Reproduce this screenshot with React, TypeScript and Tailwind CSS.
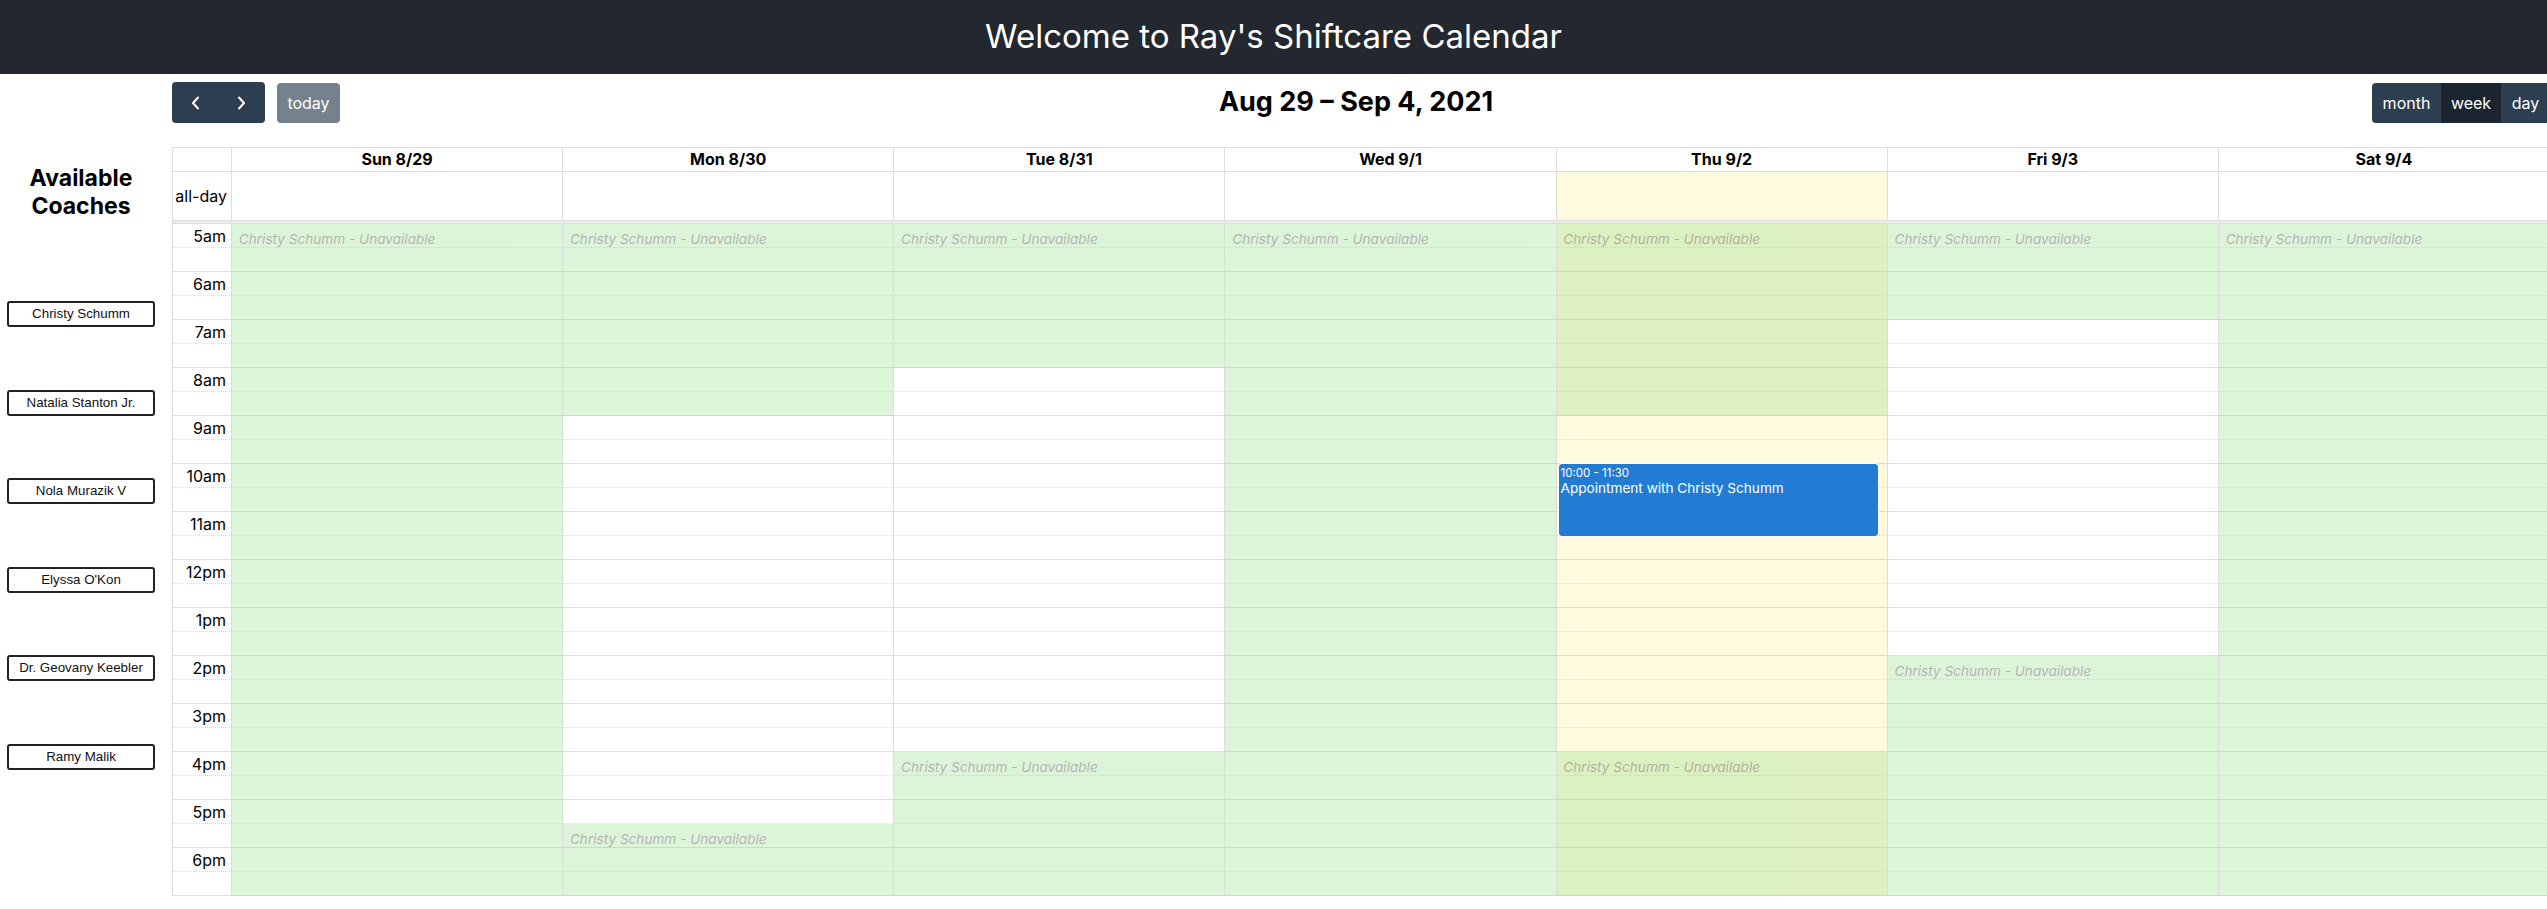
import React from "react";

type Segment = { start: number; end: number };
type Appt = { start: number; end: number; time: string; title: string };
type Day = { label: string; today?: boolean; unavailable: Segment[]; events?: Appt[] };

const COACHES = [
  "Christy Schumm",
  "Natalia Stanton Jr.",
  "Nola Murazik V",
  "Elyssa O'Kon",
  "Dr. Geovany Keebler",
  "Ramy Malik",
];

const DAYS: Day[] = [
  { label: "Sun 8/29", unavailable: [{ start: 5, end: 19 }] },
  { label: "Mon 8/30", unavailable: [{ start: 5, end: 9 }, { start: 17.5, end: 19 }] },
  { label: "Tue 8/31", unavailable: [{ start: 5, end: 8 }, { start: 16, end: 19 }] },
  { label: "Wed 9/1", unavailable: [{ start: 5, end: 19 }] },
  {
    label: "Thu 9/2",
    today: true,
    unavailable: [{ start: 5, end: 9 }, { start: 16, end: 19 }],
    events: [{ start: 10, end: 11.5, time: "10:00 - 11:30", title: "Appointment with Christy Schumm" }],
  },
  { label: "Fri 9/3", unavailable: [{ start: 5, end: 7 }, { start: 14, end: 19 }] },
  { label: "Sat 9/4", unavailable: [{ start: 5, end: 19 }] },
];

const FIRST_HOUR = 5;
const HOURS = 14;
const SLOT = 24; // half-hour slot height
const toY = (h: number) => (h - FIRST_HOUR) * SLOT * 2;

const hourLabel = (h: number) => {
  const suffix = h < 12 ? "am" : "pm";
  const n = h % 12 === 0 ? 12 : h % 12;
  return `${n}${suffix}`;
};

function Chevron({ dir }: { dir: "left" | "right" }) {
  return (
    <svg width="9" height="14" viewBox="0 0 9 14" fill="none">
      <polyline
        points={dir === "left" ? "7,1.5 2,7 7,12.5" : "2,1.5 7,7 2,12.5"}
        stroke="white"
        strokeWidth="2"
        strokeLinecap="round"
        strokeLinejoin="round"
      />
    </svg>
  );
}

function Toolbar() {
  return (
    <div className="flex items-center justify-between mb-[24px]">
      <div className="flex items-center gap-[12px]">
        <div className="flex">
          <button className="flex h-[41px] w-[46.5px] items-center justify-center rounded-l-[4px] bg-[#2c3e50]">
            <Chevron dir="left" />
          </button>
          <button className="flex h-[41px] w-[46.5px] items-center justify-center rounded-r-[4px] bg-[#2c3e50]">
            <Chevron dir="right" />
          </button>
        </div>
        <button className="h-[40px] w-[63px] rounded-[4px] bg-[#2c3e50] text-[16px] text-white opacity-65">
          today
        </button>
      </div>
      <h2 className="text-[27px] font-bold text-black">Aug 29 – Sep 4, 2021</h2>
      <div className="flex h-[40px] text-[16px] text-white">
        <button className="w-[69px] rounded-l-[4px] bg-[#2c3e50]">month</button>
        <button className="w-[60px] bg-[#1a252f]">week</button>
        <button className="w-[49px] rounded-r-[4px] bg-[#2c3e50]">day</button>
      </div>
    </div>
  );
}

function DayColumn({ day }: { day: Day }) {
  return (
    <div className={`relative border-r border-[#ddd] ${day.today ? "bg-[rgba(255,220,40,0.15)]" : ""}`}>
      {day.unavailable.map((s) => (
        <div
          key={s.start}
          className="absolute left-0 right-0 bg-[#8fdf82] opacity-30"
          style={{ top: toY(s.start), height: toY(s.end) - toY(s.start) }}
        >
          <div className="m-[6.8px] text-[13.6px] italic leading-[16px] text-black">Christy Schumm - Unavailable</div>
        </div>
      ))}
      {day.events?.map((e) => (
        <div
          key={e.title}
          className="absolute left-[2px] right-[2.5%] rounded-[3px] border border-[#237cd3] bg-[#237cd3] px-[1px] pt-[1px] text-white shadow-[0_0_0_1px_#fff]"
          style={{ top: toY(e.start), height: toY(e.end) - toY(e.start) }}
        >
          <div className="text-[11.5px] leading-[14px]">{e.time}</div>
          <div className="text-[13.6px] leading-[16px]">{e.title}</div>
        </div>
      ))}
    </div>
  );
}

function Calendar() {
  const slots = Array.from({ length: HOURS * 2 }, (_, i) => i);
  return (
    <div className="border-l border-t border-[#ddd] text-black">
      {/* day headers */}
      <div className="grid grid-cols-[59px_repeat(7,minmax(0,1fr))] border-b border-[#ddd]">
        <div className="h-[23px] border-r border-[#ddd]" />
        {DAYS.map((d) => (
          <div key={d.label} className="h-[23px] border-r border-[#ddd] text-center text-[16px] font-bold leading-[23px]">
            {d.label}
          </div>
        ))}
      </div>
      {/* all-day row */}
      <div className="grid grid-cols-[59px_repeat(7,minmax(0,1fr))] border-b border-[#ddd]">
        <div className="flex h-[48px] items-center justify-end border-r border-[#ddd] pr-[4px] text-[16px]">all-day</div>
        {DAYS.map((d) => (
          <div
            key={d.label}
            className={`h-[48px] border-r border-[#ddd] ${d.today ? "bg-[rgba(255,220,40,0.15)]" : ""}`}
          />
        ))}
      </div>
      <div className="h-[2px] border-b border-[#ddd] bg-[#ececec] box-content" />
      {/* time grid */}
      <div className="relative">
        {slots.map((i) => {
          const isHour = i % 2 === 0;
          return (
            <div
              key={i}
              className={`grid h-[24px] grid-cols-[59px_minmax(0,1fr)] border-b border-[#ddd] ${
                isHour ? "border-dotted" : "border-solid"
              }`}
            >
              <div className="border-r border-solid border-[#ddd] pr-[5px] text-right text-[16px] leading-[24px]">
                {isHour ? hourLabel(FIRST_HOUR + i / 2) : ""}
              </div>
              <div />
            </div>
          );
        })}
        <div className="absolute inset-0 grid grid-cols-[59px_repeat(7,minmax(0,1fr))]">
          <div />
          {DAYS.map((d) => (
            <DayColumn key={d.label} day={d} />
          ))}
        </div>
      </div>
    </div>
  );
}

export default function App() {
  return (
    <div className="min-h-screen w-full overflow-hidden bg-white font-['Inter',sans-serif]">
      <header className="flex h-[74px] items-center justify-center bg-[#23272f]">
        <h1 className="text-[33px] font-normal text-white">Welcome to Ray's Shiftcare Calendar</h1>
      </header>
      <div className="flex gap-[10px]">
        {/* Coaches sidebar */}
        <aside className="w-[162px] shrink-0 pt-[91px]">
          <h3 className="text-center text-[23px] font-bold leading-[27.5px] text-black">
            Available
            <br />
            Coaches
          </h3>
          <div className="mt-[81px] flex flex-col gap-[62.6px] pl-[7px]">
            {COACHES.map((c) => (
              <button
                key={c}
                className="h-[26px] w-[148px] rounded-[3px] border-2 border-[#222] bg-white font-['Liberation_Sans',Arial,sans-serif] text-[13.33px] text-[#111]"
              >
                {c}
              </button>
            ))}
          </div>
        </aside>
        <main className="w-[2378px] shrink-0 pt-[8px]">
          <Toolbar />
          <Calendar />
        </main>
      </div>
    </div>
  );
}
